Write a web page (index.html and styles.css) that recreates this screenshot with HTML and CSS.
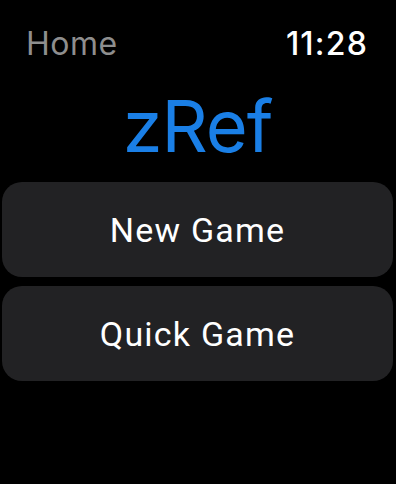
FILE: index.html
```html
<!DOCTYPE html>
<html lang="en">
<head>
    <meta charset="UTF-8">
    <meta name="viewport" content="width=device-width, initial-scale=1.0">
    <title>zRef</title>
    <link rel="stylesheet" href="styles.css">
</head>
<body>
    <div class="watch">
        <div class="status-bar">
            <span class="back-title">Home</span>
            <span class="clock">11:28</span>
        </div>

        <h1 class="app-title">zRef</h1>

        <div class="menu">
            <button class="menu-button">New Game</button>
            <button class="menu-button">Quick Game</button>
        </div>
    </div>
</body>
</html>
```

FILE: styles.css
```css
body {
    margin: 0;
    background-color: #000;
    font-family: 'Inter', 'Roboto', sans-serif;
    color: #fff;
}

.watch {
    width: 396px;
    height: 484px;
    box-sizing: border-box;
    padding: 24px 3px 0 2px;
}

.status-bar {
    display: flex;
    justify-content: space-between;
    align-items: baseline;
    padding: 0 25px 0 24px;
    height: 40px;
}

.back-title {
    font-size: 32px;
    letter-spacing: 0.5px;
    color: #8e8e8e;
}

.clock {
    font-size: 32px;
    font-weight: 500;
    letter-spacing: 1.2px;
    color: #fff;
}

.app-title {
    margin: 22px 0 16px;
    text-align: center;
    font-size: 72px;
    font-weight: 400;
    line-height: 80px;
    color: #1a7fe6;
    letter-spacing: -1px;
}

.menu {
    display: flex;
    flex-direction: column;
    gap: 9px;
}

.menu-button {
    height: 95px;
    border: none;
    border-radius: 20px;
    background-color: #222224;
    color: #fff;
    font-family: 'Roboto', sans-serif;
    font-size: 34px;
    letter-spacing: 1.2px;
    cursor: pointer;
}
```
